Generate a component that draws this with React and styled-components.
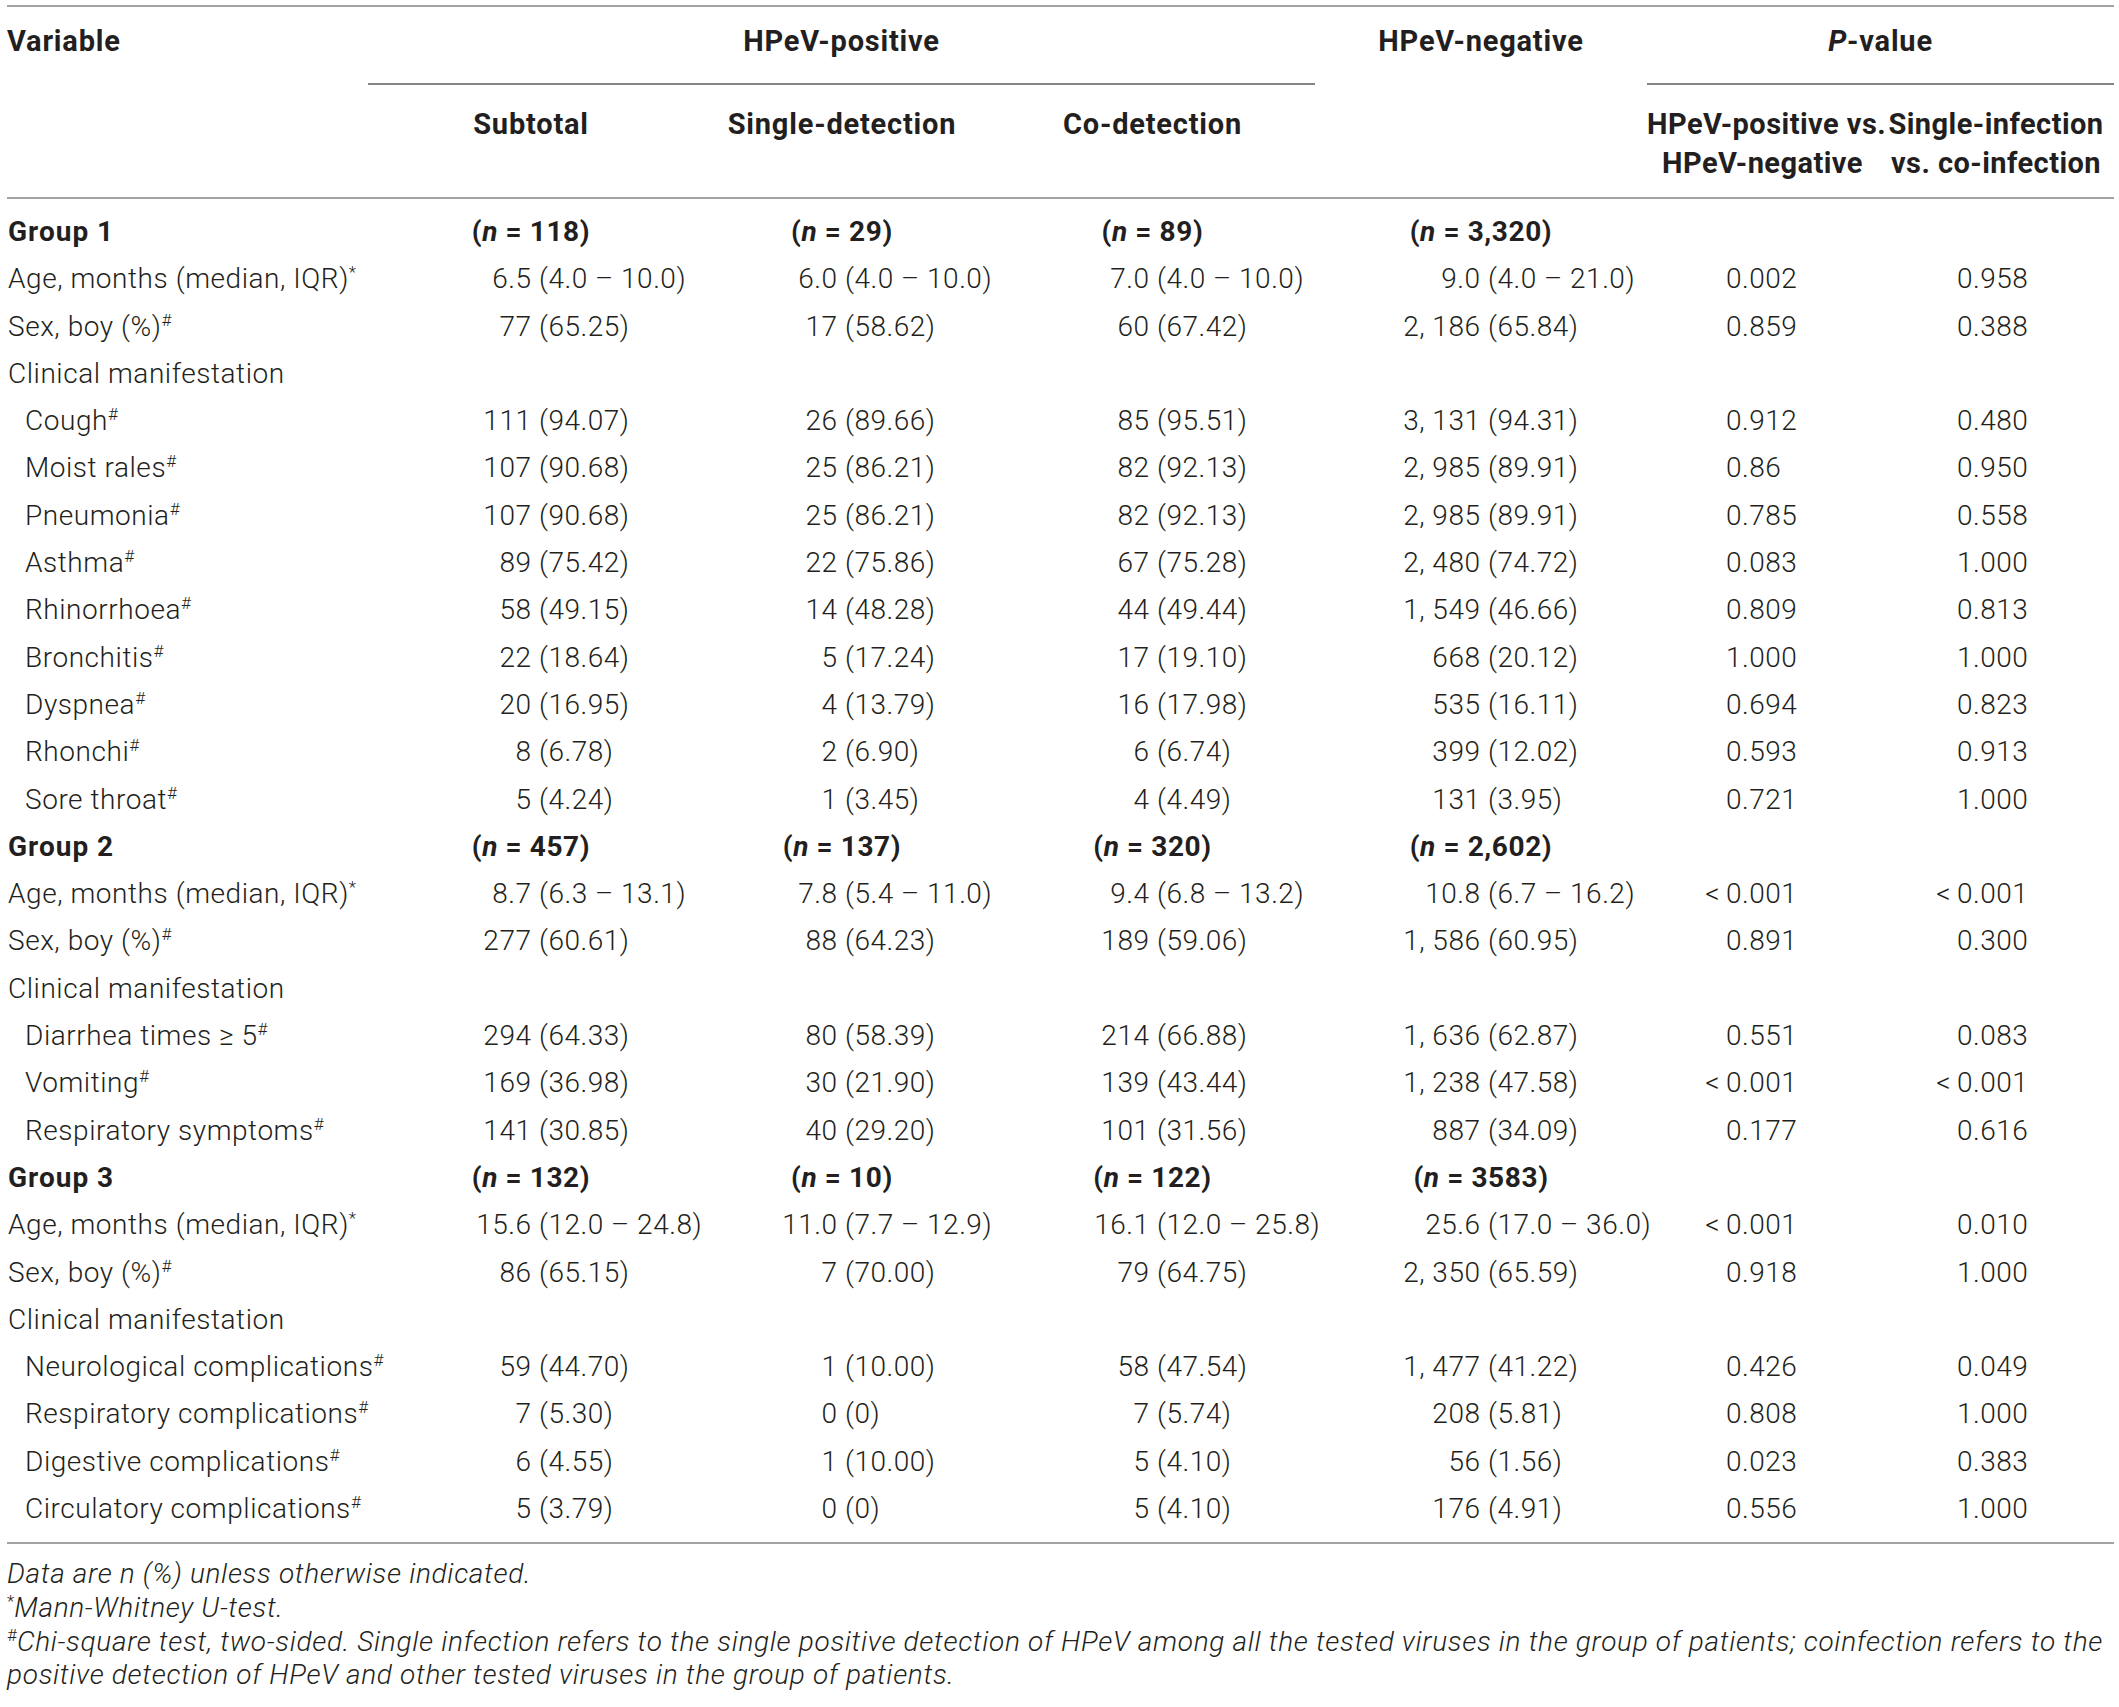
import React from 'react';
import styled, { createGlobalStyle } from 'styled-components';

const COLS = '361px 326px 296px 325px 332px 231px 236px';
// x of the "(" inside each value column, measured from the column's left edge
const ANCHORS = [171, 151, 167, 173];

const GlobalStyle = createGlobalStyle`
  body {
    margin: 0;
    background: #ffffff;
    color: #231f20;
    font-family: Roboto, "Liberation Sans", Arial, sans-serif;
    font-weight: 300;
    letter-spacing: 0.5px;
  }
`;

const Page = styled.div`
  padding: 5px 0 0 7px;
  width: 2107px;
`;

/*---------- header ----------*/
const Head = styled.div`
  display: grid;
  grid-template-columns: ${COLS};
  border-top: 2px solid #a3a3a3;
  border-bottom: 2px solid #a3a3a3;
  font-weight: 700;
  font-size: 29px;
  letter-spacing: 0.8px;
`;

const TopCell = styled.div`
  grid-column: span ${(p) => p.$span || 1};
  text-align: ${(p) => p.$align || 'center'};
  padding: 11px 0 18px;
  line-height: 47px;
  border-bottom: 2px solid ${(p) => (p.$rule ? '#858585' : 'transparent')};
`;

const SubCell = styled.div`
  text-align: center;
  padding: 20px 0 14px;
  line-height: 39px;
  white-space: nowrap;
  letter-spacing: ${(p) => (p.$tight ? '0.45px' : '0.8px')};
`;

/*---------- body ----------*/
const Body = styled.div`
  padding: 9px 0 10px;
  border-bottom: 2px solid #a3a3a3;
  font-size: 28px;
`;

const Row = styled.div`
  display: grid;
  grid-template-columns: ${COLS};
  height: 47.3px;
  line-height: 47.3px;
  white-space: nowrap;
`;

const Label = styled.div`
  padding-left: ${(p) => (p.$indent ? 18 : 1)}px;
  font-weight: ${(p) => (p.$bold ? 700 : 300)};
  letter-spacing: ${(p) => (p.$bold ? '1px' : '0.55px')};
`;

const Count = styled.div`
  text-align: center;
  font-weight: 700;
  letter-spacing: 0.6px;
`;

const ValueCell = styled.div`
  display: grid;
  grid-template-columns: ${(p) => p.$anchor}px auto;
`;

const Num = styled.span`
  text-align: right;
  padding-right: 0.27em;
`;

const PCell = styled.div`
  padding-left: 79px;
`;

const Lt = styled.span`
  display: inline-block;
  width: 24px;
  margin-left: -24px;
  padding-right: 6px;
  text-align: right;
  box-sizing: border-box;
`;

const Sup = styled.sup`
  font-size: 17px;
  line-height: 0;
  vertical-align: 10px;
  font-weight: 300;
  font-style: normal;
  letter-spacing: 0;
`;

/*---------- notes ----------*/
const Notes = styled.div`
  padding-top: 13px;
  font-size: 28px;
  line-height: 33.6px;
  font-style: italic;
  letter-spacing: 0.68px;
  white-space: nowrap;
`;

const groups = [
  {
    name: 'Group 1',
    n: ['118', '29', '89', '3,320'],
    rows: [
      ['Age, months (median, IQR)', '*', ['6.5 (4.0 – 10.0)', '6.0 (4.0 – 10.0)', '7.0 (4.0 – 10.0)', '9.0 (4.0 – 21.0)'], ['0.002', '0.958']],
      ['Sex, boy (%)', '#', ['77 (65.25)', '17 (58.62)', '60 (67.42)', '2, 186 (65.84)'], ['0.859', '0.388']],
      ['Clinical manifestation'],
      ['Cough', '#', ['111 (94.07)', '26 (89.66)', '85 (95.51)', '3, 131 (94.31)'], ['0.912', '0.480']],
      ['Moist rales', '#', ['107 (90.68)', '25 (86.21)', '82 (92.13)', '2, 985 (89.91)'], ['0.86', '0.950']],
      ['Pneumonia', '#', ['107 (90.68)', '25 (86.21)', '82 (92.13)', '2, 985 (89.91)'], ['0.785', '0.558']],
      ['Asthma', '#', ['89 (75.42)', '22 (75.86)', '67 (75.28)', '2, 480 (74.72)'], ['0.083', '1.000']],
      ['Rhinorrhoea', '#', ['58 (49.15)', '14 (48.28)', '44 (49.44)', '1, 549 (46.66)'], ['0.809', '0.813']],
      ['Bronchitis', '#', ['22 (18.64)', '5 (17.24)', '17 (19.10)', '668 (20.12)'], ['1.000', '1.000']],
      ['Dyspnea', '#', ['20 (16.95)', '4 (13.79)', '16 (17.98)', '535 (16.11)'], ['0.694', '0.823']],
      ['Rhonchi', '#', ['8 (6.78)', '2 (6.90)', '6 (6.74)', '399 (12.02)'], ['0.593', '0.913']],
      ['Sore throat', '#', ['5 (4.24)', '1 (3.45)', '4 (4.49)', '131 (3.95)'], ['0.721', '1.000']],
    ],
  },
  {
    name: 'Group 2',
    n: ['457', '137', '320', '2,602'],
    rows: [
      ['Age, months (median, IQR)', '*', ['8.7 (6.3 – 13.1)', '7.8 (5.4 – 11.0)', '9.4 (6.8 – 13.2)', '10.8 (6.7 – 16.2)'], ['<0.001', '<0.001']],
      ['Sex, boy (%)', '#', ['277 (60.61)', '88 (64.23)', '189 (59.06)', '1, 586 (60.95)'], ['0.891', '0.300']],
      ['Clinical manifestation'],
      ['Diarrhea times ≥ 5', '#', ['294 (64.33)', '80 (58.39)', '214 (66.88)', '1, 636 (62.87)'], ['0.551', '0.083']],
      ['Vomiting', '#', ['169 (36.98)', '30 (21.90)', '139 (43.44)', '1, 238 (47.58)'], ['<0.001', '<0.001']],
      ['Respiratory symptoms', '#', ['141 (30.85)', '40 (29.20)', '101 (31.56)', '887 (34.09)'], ['0.177', '0.616']],
    ],
  },
  {
    name: 'Group 3',
    n: ['132', '10', '122', '3583'],
    rows: [
      ['Age, months (median, IQR)', '*', ['15.6 (12.0 – 24.8)', '11.0 (7.7 – 12.9)', '16.1 (12.0 – 25.8)', '25.6 (17.0 – 36.0)'], ['<0.001', '0.010']],
      ['Sex, boy (%)', '#', ['86 (65.15)', '7 (70.00)', '79 (64.75)', '2, 350 (65.59)'], ['0.918', '1.000']],
      ['Clinical manifestation'],
      ['Neurological complications', '#', ['59 (44.70)', '1 (10.00)', '58 (47.54)', '1, 477 (41.22)'], ['0.426', '0.049']],
      ['Respiratory complications', '#', ['7 (5.30)', '0 (0)', '7 (5.74)', '208 (5.81)'], ['0.808', '1.000']],
      ['Digestive complications', '#', ['6 (4.55)', '1 (10.00)', '5 (4.10)', '56 (1.56)'], ['0.023', '0.383']],
      ['Circulatory complications', '#', ['5 (3.79)', '0 (0)', '5 (4.10)', '176 (4.91)'], ['0.556', '1.000']],
    ],
  },
];

const Value = ({ text, anchor }) => {
  const cut = text.indexOf(' (');
  return (
    <ValueCell $anchor={anchor}>
      <Num>{text.slice(0, cut)}</Num>
      <span>{text.slice(cut + 1)}</span>
    </ValueCell>
  );
};

const PValue = ({ text }) =>
  text.startsWith('<') ? (
    <PCell>
      <Lt>&lt;</Lt>
      {text.slice(1)}
    </PCell>
  ) : (
    <PCell>{text}</PCell>
  );

const DataRow = ({ row }) => {
  const [label, mark, vals, ps] = row;
  // rows under "Clinical manifestation" are indented; the first two are not
  const indent = !label.startsWith('Age') && !label.startsWith('Sex') && vals;
  return (
    <Row>
      <Label $indent={indent}>
        {label}
        {mark && <Sup>{mark}</Sup>}
      </Label>
      {vals ? (
        <>
          {vals.map((v, i) => (
            <Value key={i} text={v} anchor={ANCHORS[i]} />
          ))}
          {ps.map((p, i) => (
            <PValue key={i} text={p} />
          ))}
        </>
      ) : null}
    </Row>
  );
};

export default function App() {
  return (
    <Page>
      <GlobalStyle />
      <Head>
        <TopCell $align="left">Variable</TopCell>
        <TopCell $span={3} $rule>
          HPeV-positive
        </TopCell>
        <TopCell>HPeV-negative</TopCell>
        <TopCell $span={2} $rule>
          <i>P</i>-value
        </TopCell>

        <SubCell />
        <SubCell>Subtotal</SubCell>
        <SubCell>Single-detection</SubCell>
        <SubCell>Co-detection</SubCell>
        <SubCell />
        <SubCell $tight>
          HPeV-positive vs.
          <br />
          HPeV-negative
        </SubCell>
        <SubCell $tight>
          Single-infection
          <br />
          vs. co-infection
        </SubCell>
      </Head>

      <Body>
        {groups.map((g) => (
          <React.Fragment key={g.name}>
            <Row>
              <Label $bold>{g.name}</Label>
              {g.n.map((n, i) => (
                <Count key={i}>
                  (<i>n</i> = {n})
                </Count>
              ))}
            </Row>
            {g.rows.map((r, i) => (
              <DataRow key={i} row={r} />
            ))}
          </React.Fragment>
        ))}
      </Body>

      <Notes>
        Data are n (%) unless otherwise indicated.
        <br />
        <Sup>*</Sup>Mann-Whitney U-test.
        <br />
        <Sup>#</Sup>Chi-square test, two-sided. Single infection refers to the single positive detection of HPeV
        among all the tested viruses in the group of patients; coinfection refers to the
        <br />
        positive detection of HPeV and other tested viruses in the group of patients.
      </Notes>
    </Page>
  );
}
